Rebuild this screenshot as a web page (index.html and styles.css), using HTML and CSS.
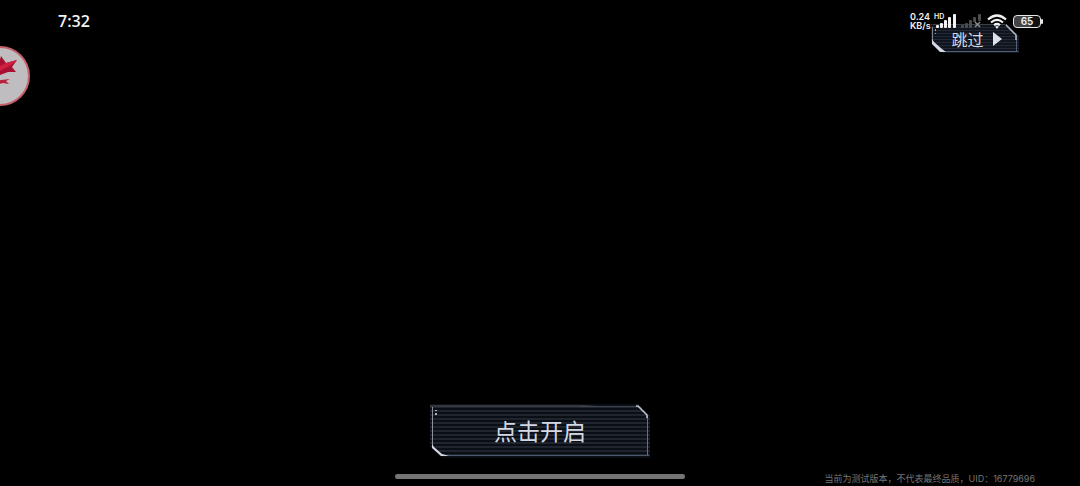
FILE: index.html
```
<!DOCTYPE html>
<html lang="zh-CN">
<head>
    <meta charset="UTF-8">
    <meta name="viewport" content="width=device-width, initial-scale=1.0">
    <title>点击开启</title>
    <link rel="stylesheet" href="styles.css">
</head>
<body>
    <div id="app">
        <!-- Status bar -->
        <header class="status-bar">
            <time class="clock">7:32</time>
            <div class="indicators">
                <div class="speed"><span>0.24</span><span>KB/s</span></div>
                <div class="signal-hd">
                    <span class="hd">HD</span>
                    <svg width="24" height="14" viewBox="0 0 24 14" fill="#f2f2f2" aria-hidden="true">
                        <rect x="2" y="11" width="3" height="3" rx="1"/>
                        <rect x="6" y="9" width="3" height="5" rx="1"/>
                        <rect x="10" y="6" width="3" height="8" rx="1"/>
                        <rect x="14" y="3" width="3" height="11" rx="1"/>
                        <rect x="19" y="0" width="3" height="14" rx="1"/>
                    </svg>
                </div>
                <svg class="signal-off" width="22" height="14" viewBox="0 0 22 14" fill="#4c4c4e" aria-hidden="true">
                    <rect x="0" y="11" width="3" height="3" rx="1"/>
                    <rect x="4" y="9" width="3" height="5" rx="1"/>
                    <rect x="8" y="6" width="3" height="8" rx="1"/>
                    <rect x="12" y="3" width="3" height="5" rx="1"/>
                    <rect x="17" y="0" width="3" height="7" rx="1"/>
                    <path d="M14 8l5 5M19 8l-5 5" stroke="#8a8a8c" stroke-width="1.500"/>
                </svg>
                <svg class="wifi" width="20" height="15" viewBox="0 0 20 15" fill="none" stroke="#f2f2f2" stroke-width="2.200" aria-hidden="true">
                    <path d="M1 5.500Q10-2.500 19 5.500M4 8.500Q10 3.400 16 8.500M7 11.200Q10 8.800 13 11.200"/>
                    <path d="M8.200 12.600Q10 11.400 11.800 12.600L10 15z" fill="#f2f2f2" stroke="none"/>
                </svg>
                <div class="battery">65</div>
            </div>
        </header>

        <button class="skip" type="button">
            <svg class="frame" viewBox="0 0 88 29" preserveAspectRatio="none" fill="none" aria-hidden="true">
                <path d="M1.500 17V3" stroke="#7b818c"/>
                <path d="M2 .500H76" stroke="#3a4048"/>
                <path d="M85.500 12V28M12 27.500H87" stroke="#52617a"/>
                <path d="M75 1L85 11V16" stroke="#b4bac6" stroke-width="1.500"/>
                <path d="M1 15L3 18L11 25L15 28H9L1 20z" fill="#d5d9e4"/>
                <path d="M4.500 5v2M4.500 9v1" stroke="#a0a6b0"/>
            </svg>
            <span>跳过</span>
            <svg class="arrow" width="9" height="14" viewBox="0 0 9 14" aria-hidden="true"><path d="M0 0L9 7L0 14z" fill="#dde1ec"/></svg>
        </button>

        <!-- Floating assistant ball docked to the left edge -->
        <button class="float-ball" type="button" aria-label="悬浮球">
            <svg width="60" height="60" viewBox="0 0 60 60" aria-hidden="true">
                <circle cx="30" cy="30" r="29" fill="#bfbdbf" stroke="#c4626a" stroke-width="2"/>
                <path d="M14 20L29 17L31 10L36 17L47 14L42 21L46 26L38 26L30 29L16 32z" fill="#a80f33"/>
                <path d="M36 17L47 14L41 19L30 25V20z" fill="#cf1f40"/>
                <path d="M24 36L31 34L40 33L36 35L39 38L33 37L24 39z" fill="#bd1f3e"/>
            </svg>
        </button>

        <main class="stage">
            <button class="start" type="button">
                <svg class="frame" viewBox="0 0 220 54" preserveAspectRatio="none" fill="none" aria-hidden="true">
                    <path d="M2.500 42V3" stroke="#8a919b"/>
                    <path d="M0 1H154L180 3H0z" fill="#34383e"/>
                    <path d="M150 2.500H208" stroke="#3e444d"/>
                    <path d="M217.500 12V52" stroke="#66707c"/>
                    <path d="M14 51.500H219" stroke="#4a5a6b"/>
                    <path d="M206 2H208L217 11V14" stroke="#c3c8d0" stroke-width="1.500"/>
                    <path d="M2 40L4 43L12 50L19 52H11L2 44z" fill="#d5d9e2"/>
                    <path d="M6 6v1M6 9v2" stroke="#b0b5bd" stroke-width="2"/>
                </svg>
                <span>点击开启</span>
            </button>
        </main>

        <footer class="bottom-bar">
            <div class="home-bar"></div>
            <p class="version">当前为测试版本，不代表最终品质，UID：16779696</p>
        </footer>
    </div>
</body>
</html>
```
FILE: styles.css
```
* {
    box-sizing: border-box;
}
body {
    margin: 0;
    background: #000;
    color: #f2f2f2;
    font-family: "Noto Sans", "Noto Sans CJK SC", sans-serif;
}
button {
    padding: 0;
    border: 0;
    background: none;
    color: #d3d8e4;
    font-family: "Noto Sans CJK SC", sans-serif;
    cursor: pointer;
}
#app {
    position: relative;
    display: flex;
    flex-direction: column;
    min-height: 100vh;
    overflow: hidden;
}
/* System icons stay above the game's own buttons */
.status-bar {
    position: relative;
    z-index: 2;
    display: flex;
    justify-content: space-between;
    align-items: center;
    height: 42px;
    padding: 0 36px 0 58px;
    pointer-events: none;
}
.clock {
    font-family: "Open Sans", sans-serif;
    font-size: 16px;
    font-weight: 600;
}
.indicators {
    display: flex;
    align-items: center;
}
.speed {
    display: flex;
    flex-direction: column;
    width: 24px;
    font-family: Inter, sans-serif;
    font-size: 9px;
    font-weight: 600;
    line-height: 9px;
}
.signal-hd {
    position: relative;
    display: flex;
    width: 27px;
}
.hd {
    position: absolute;
    top: -1px;
    left: 0;
    font-family: Inter, sans-serif;
    font-size: 7px;
    font-weight: 600;
    line-height: 7px;
}
.wifi {
    margin: 0 6px 0 4px;
}
.battery {
    position: relative;
    width: 28px;
    height: 13px;
    margin-right: 3px;
    border: 1px solid #e8e8e8;
    border-radius: 4px;
    background: linear-gradient(90deg, #444 65%, #111 65%);
    font-family: Inter, sans-serif;
    font-size: 10px;
    font-weight: 600;
    line-height: 11px;
    text-align: center;
}
.battery::after {
    content: "";
    position: absolute;
    top: 3px;
    right: -3px;
    width: 2px;
    height: 5px;
    border-radius: 1px;
    background: #e8e8e8;
}

/* Angular framed buttons with scan lines */
.skip,
.start {
    display: flex;
    align-items: center;
    justify-content: center;
}
.skip::before,
.start::before {
    content: "";
    position: absolute;
    inset: 0;
}
.skip span,
.start span,
.arrow {
    position: relative;
}
.frame {
    position: absolute;
    inset: 0;
    width: 100%;
    height: 100%;
}
.skip {
    position: absolute;
    top: 24px;
    right: 61px;
    gap: 9px;
    width: 88px;
    height: 29px;
    padding-left: 3px;
    font-size: 16px;
    line-height: 24px;
}
.skip::before {
    background: repeating-linear-gradient(#222836 0 1px, #10141d 1px 3px);
    clip-path: polygon(0 0, 76px 0, 100% 12px, 100% 100%, 12px 100%, 0 18px);
}
.start {
    position: relative;
    width: 220px;
    height: 54px;
    padding-bottom: 2px;
    font-size: 23px;
    line-height: 34px;
}
.start::before {
    background: repeating-linear-gradient(#0a0e15 0 2px, #1f242e 2px 4px);
    clip-path: polygon(0 0, 208px 0, 100% 12px, 100% 100%, 12px 100%, 0 42px);
}

.float-ball {
    position: absolute;
    top: 46px;
    left: -30px;
    height: 60px;
    border-radius: 50%;
}
.float-ball svg {
    display: block;
}
.stage {
    display: flex;
    flex: 1;
    align-items: flex-end;
    justify-content: center;
    padding-bottom: 14px;
}
.bottom-bar {
    display: grid;
    grid-template-columns: 1fr 290px 1fr;
    align-items: center;
    height: 14px;
    padding: 0 45px;
}
.home-bar {
    grid-column: 2;
    height: 5px;
    margin-bottom: 5px;
    border-radius: 3px;
    background: #747474;
}
.version {
    margin: 0;
    color: #747474;
    font-family: Inter, "Noto Sans CJK SC", sans-serif;
    font-size: 9px;
    line-height: 14px;
    text-align: right;
    white-space: nowrap;
}
```
